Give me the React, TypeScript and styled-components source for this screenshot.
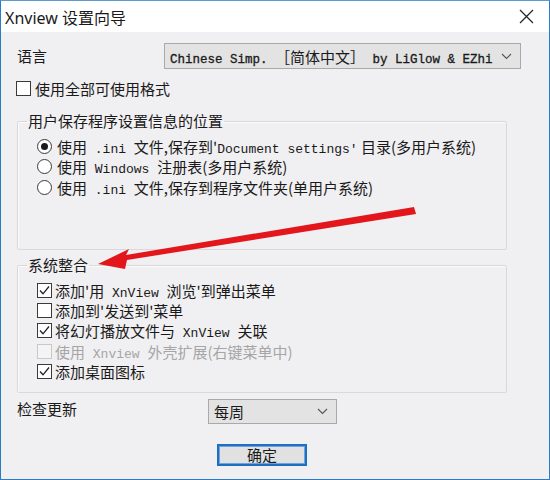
import React from "react";
import styled, { createGlobalStyle } from "styled-components";

const GlobalStyle = createGlobalStyle`
  html, body {
    margin: 0;
    padding: 0;
    background: #ffffff;
  }
  * {
    box-sizing: border-box;
  }
`;

const CJK = `"Noto Sans CJK SC", "Noto Sans", sans-serif`;
const MONO = `"Liberation Mono", "Noto Sans CJK SC", monospace`;

const Window = styled.div`
  position: relative;
  width: 550px;
  height: 480px;
  border: 1px solid #2a7cc4;
  border-top-color: #5b9bd0;
  background: #f0eff1;
  font-family: ${CJK};
  color: #1a1a1a;
  overflow: hidden;
`;

const TitleBar = styled.div`
  display: flex;
  align-items: center;
  justify-content: space-between;
  height: 31px;
  padding: 0 15px 0 4px;
  background: #ffffff;
  font-family: "Noto Sans", ${CJK};
  font-size: 16px;
`;

const Body = styled.div`
  display: flex;
  flex-direction: column;
  padding: 11px 27px 0 15px;
`;

const Row = styled.div<{ $mt?: number }>`
  display: flex;
  align-items: center;
  margin-top: ${(p) => p.$mt ?? 0}px;
`;

const Label = styled.div<{ $w: number; $align?: string }>`
  width: ${(p) => p.$w}px;
  align-self: ${(p) => p.$align ?? "center"};
  font-size: 15px;
  line-height: 20px;
  padding-left: 1px;
`;

const Select = styled.div<{ $w: number; $h: number }>`
  display: flex;
  align-items: center;
  justify-content: space-between;
  width: ${(p) => p.$w}px;
  height: ${(p) => p.$h}px;
  padding: 0 8px 0 5px;
  background: #e3e3e3;
  border: 1px solid #a9a9a9;
  font-size: 15px;
  white-space: nowrap;
`;

const MonoText = styled.span<{ $size?: number }>`
  font-family: ${MONO};
  font-size: ${(p) => p.$size ?? 13}px;
  -webkit-text-stroke: ${(p) => (p.$size ? "0.3px" : "0")};
`;

const Cjk = styled.span`
  font-family: ${CJK};
  font-size: 15px;
`;

const Check = styled.label<{ $gap: number; $disabled?: boolean }>`
  display: flex;
  align-items: center;
  gap: ${(p) => p.$gap}px;
  height: 20.3px;
  font-size: 15px;
  white-space: nowrap;
  color: ${(p) => (p.$disabled ? "#a6a6a6" : "#1a1a1a")};
`;

const Box = styled.span<{ $disabled?: boolean }>`
  display: flex;
  align-items: center;
  justify-content: center;
  width: 15px;
  height: 15px;
  border: 1px solid ${(p) => (p.$disabled ? "#c8c8c8" : "#3a3a3a")};
  background: ${(p) => (p.$disabled ? "#f4f4f4" : "#ffffff")};
`;

const Radio = styled.span`
  display: flex;
  align-items: center;
  justify-content: center;
  width: 15px;
  height: 15px;
  border-radius: 50%;
  border: 1px solid #3a3a3a;
  background: #ffffff;
`;

const Dot = styled.span`
  width: 7px;
  height: 7px;
  border-radius: 50%;
  background: #1a1a1a;
`;

const Group = styled.fieldset<{ $mt: number; $pb: number }>`
  margin: ${(p) => p.$mt}px 0 0 1px;
  width: 490px;
  padding: 5px 0 ${(p) => p.$pb}px 9px;
  border: 1px solid #d9d9db;
  border-radius: 2px;
  box-shadow: inset 1px 1px 0 #fbfbfb;
`;

const Legend = styled.legend`
  padding: 0 1px;
  font-size: 15px;
  line-height: 20px;
`;

const Items = styled.div`
  display: flex;
  flex-direction: column;
  margin-left: 10px;
`;

const Button = styled.button`
  margin: 20px 0 0 201px;
  width: 90px;
  height: 22px;
  padding: 0;
  background: #e1e1e1;
  border: 2px solid #1f6fc0;
  box-shadow: inset 0 0 0 1px #6aa6dd;
  font-family: ${CJK};
  font-size: 15px;
  line-height: 16px;
  color: #1a1a1a;
`;

const Overlay = styled.svg`
  position: absolute;
  left: 0;
  top: 0;
  pointer-events: none;
`;

const Chevron = () => (
  <svg width="11" height="7" viewBox="0 0 11 7">
    <path d="M1 1 L5.5 5.5 L10 1" fill="none" stroke="#555" strokeWidth="1.1" />
  </svg>
);

const Tick = () => (
  <svg width="13" height="13" viewBox="0 0 13 13">
    <path d="M2 6.5 L5 9.8 L11 2.5" fill="none" stroke="#222" strokeWidth="1.3" />
  </svg>
);

const CheckItem: React.FC<{ checked?: boolean; disabled?: boolean; gap?: number; children: React.ReactNode }> = ({
  checked,
  disabled,
  gap = 3,
  children,
}) => (
  <Check $gap={gap} $disabled={disabled}>
    <Box $disabled={disabled}>{checked && <Tick />}</Box>
    <span>{children}</span>
  </Check>
);

const RadioItem: React.FC<{ checked?: boolean; children: React.ReactNode }> = ({ checked, children }) => (
  <Check $gap={5}>
    <Radio>{checked && <Dot />}</Radio>
    <span>{children}</span>
  </Check>
);

export default function App() {
  return (
    <>
      <GlobalStyle />
      <Window>
        <TitleBar>
          <span>Xnview 设置向导</span>
          <svg width="15" height="15" viewBox="0 0 15 15">
            <path d="M1 1 L14 14 M14 1 L1 14" stroke="#222" strokeWidth="1.2" />
          </svg>
        </TitleBar>

        <Body>
          <Row>
            <Label $w={148}>语言</Label>
            <Select $w={357} $h={26}>
              <span>
                <MonoText $size={12.5}>Chinese Simp. </MonoText>
                <Cjk>［简体中文］</Cjk>
                <MonoText $size={12.5}> by LiGlow &amp; EZhi</MonoText>
              </span>
              <Chevron />
            </Select>
          </Row>

          <Row $mt={9}>
            <CheckItem gap={4}>使用全部可使用格式</CheckItem>
          </Row>

          <Group $mt={13} $pb={52}>
            <Legend>用户保存程序设置信息的位置</Legend>
            <Items>
              <RadioItem checked>
                使用<MonoText> .ini </MonoText>文件,保存到'<MonoText>Document settings'</MonoText> 目录(多用户系统)
              </RadioItem>
              <RadioItem>
                使用<MonoText> Windows </MonoText>注册表(多用户系统)
              </RadioItem>
              <RadioItem>
                使用<MonoText> .ini </MonoText>文件,保存到程序文件夹(单用户系统)
              </RadioItem>
            </Items>
          </Group>

          <Group $mt={5} $pb={10}>
            <Legend>系统整合</Legend>
            <Items>
              <CheckItem checked>
                添加'用<MonoText> XnView </MonoText>浏览'到弹出菜单
              </CheckItem>
              <CheckItem>添加到'发送到'菜单</CheckItem>
              <CheckItem checked>
                将幻灯播放文件与<MonoText> XnView </MonoText>关联
              </CheckItem>
              <CheckItem disabled>
                使用<MonoText> Xnview </MonoText>外壳扩展(右键菜单中)
              </CheckItem>
              <CheckItem checked>添加桌面图标</CheckItem>
            </Items>
          </Group>

          <Row $mt={6}>
            <Label $w={192} $align="flex-start">检查更新</Label>
            <Select $w={129} $h={25}>
              <span>每周</span>
              <Chevron />
            </Select>
          </Row>

          <Row>
            <Button>确定</Button>
          </Row>
        </Body>

        <Overlay width="550" height="480" viewBox="0 0 550 480">
          <polygon
            points="97,263 128,248 125,254 413,206 415,213 126,259 124,268"
            fill="#e3161b"
          />
        </Overlay>
      </Window>
    </>
  );
}
